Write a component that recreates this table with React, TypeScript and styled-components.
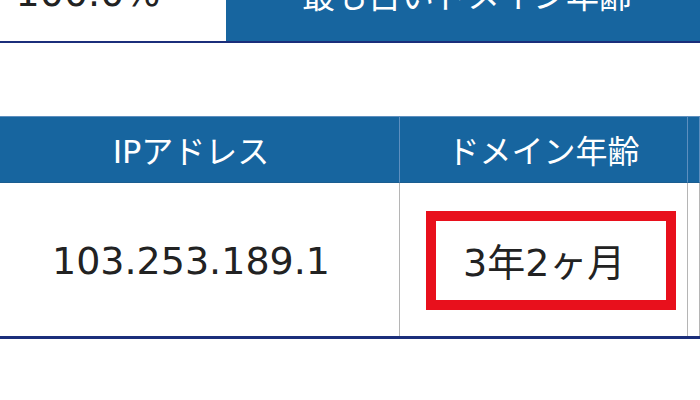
import React from "react";
import styled, { createGlobalStyle } from "styled-components";

const Global = createGlobalStyle`
  html, body { margin: 0; padding: 0; background: #fff; }
  body { width: 700px; height: 400px; overflow: hidden; }
`;

const BLUE = "#17659f";
const NAVY = "#1b2e7b";
const LATIN_JP = `"DejaVu Sans", "Noto Sans CJK JP", sans-serif`;

const Page = styled.div`
  width: 700px;
  height: 400px;
  overflow: hidden;
  display: flex;
  flex-direction: column;
`;

const TopTable = styled.div`
  display: grid;
  grid-template-columns: 226px 1fr;
  grid-template-rows: 41px;
  height: 41px;
  border-bottom: 2px solid ${NAVY};
`;

const TopCell = styled.div<{ $head?: boolean }>`
  display: flex;
  align-items: flex-end;
  justify-content: center;
  min-height: 0;
  height: 41px;
  box-sizing: border-box;
  padding-bottom: 24px;
  padding-left: ${(p) => (p.$head ? "8px" : "0")};
  padding-right: ${(p) => (p.$head ? "0" : "50px")};
  background: ${(p) => (p.$head ? BLUE : "#fff")};
  color: ${(p) => (p.$head ? "#fff" : "#222")};
  font-family: ${LATIN_JP};
  font-size: ${(p) => (p.$head ? "33px" : "38px")};
  line-height: 1.2;
  white-space: nowrap;
`;

const Table = styled.div`
  margin-top: 73px;
  display: grid;
  grid-template-columns: 400px 288px 1fr;
  grid-template-rows: 66px 153px;
  border-top: 1px solid #5d8fbf;
  border-bottom: 3px solid ${NAVY};
`;

const HeadCell = styled.div<{ $first?: boolean }>`
  background: ${BLUE};
  color: #fff;
  display: flex;
  align-items: center;
  justify-content: center;
  font-family: ${LATIN_JP};
  font-size: 32px;
  padding-right: ${(p) => (p.$first ? "17px" : "0")};
  padding-bottom: 2px;
  border-right: 1px solid #5d8fbf;
  border-bottom: 1px solid #1a5d90;
  white-space: nowrap;
`;

const BodyCell = styled.div<{ $first?: boolean }>`
  background: #fff;
  color: #222;
  display: flex;
  align-items: center;
  justify-content: center;
  font-family: ${LATIN_JP};
  font-size: 38px;
  padding-right: ${(p) => (p.$first ? "17px" : "0")};
  padding-top: 2px;
  border-right: 1px solid #b5b5b5;
  white-space: nowrap;
`;

const Highlight = styled.div`
  box-sizing: border-box;
  width: 250px;
  height: 99px;
  margin-left: 15px;
  border: 10px solid #e8101c;
  display: flex;
  align-items: center;
  padding-left: 27px;
  padding-bottom: 2px;
`;

export default function App() {
  return (
    <Page>
      <Global />
      <TopTable>
        <TopCell>100.0%</TopCell>
        <TopCell $head>最も古いドメイン年齢</TopCell>
      </TopTable>
      <Table>
        <HeadCell $first>IPアドレス</HeadCell>
        <HeadCell>ドメイン年齢</HeadCell>
        <HeadCell />
        <BodyCell $first>103.253.189.1</BodyCell>
        <BodyCell>
          <Highlight>3年2ヶ月</Highlight>
        </BodyCell>
        <BodyCell />
      </Table>
    </Page>
  );
}
